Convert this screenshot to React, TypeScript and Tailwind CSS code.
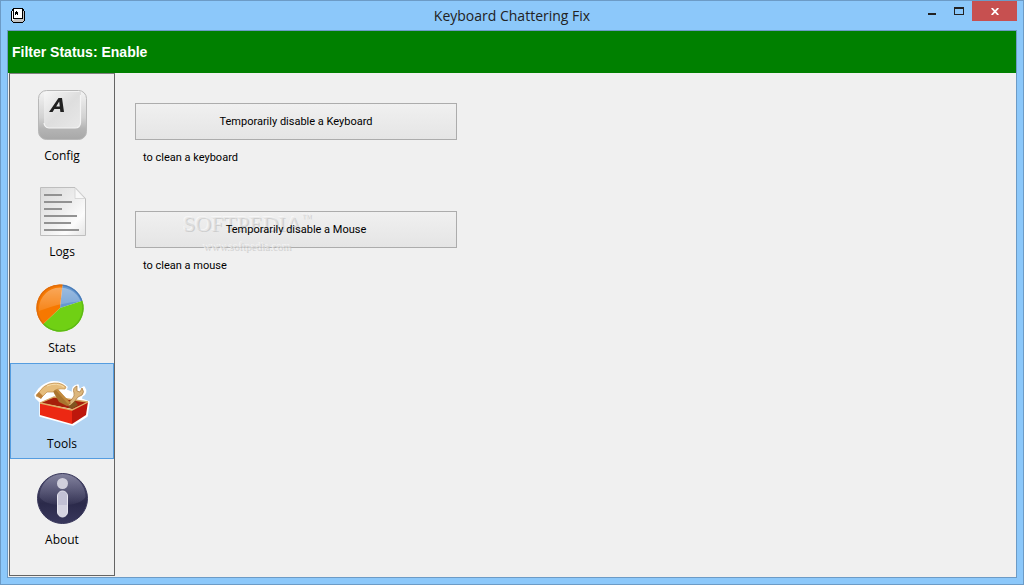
import type { ReactNode } from "react";

function KeyIcon() {
  return (
    <svg viewBox="0 0 56 56" className="size-14" aria-hidden="true">
      <defs>
        <linearGradient id="keyBase" x1="0" y1="0" x2="0" y2="1">
          <stop offset="0" stopColor="#f4f4f4" />
          <stop offset="0.55" stopColor="#d2d2d2" />
          <stop offset="0.78" stopColor="#b4b4b4" />
          <stop offset="1" stopColor="#a8a8a8" />
        </linearGradient>
        <linearGradient id="keyTop" x1="0" y1="0" x2="1" y2="1">
          <stop offset="0" stopColor="#f6f6f6" />
          <stop offset="0.5" stopColor="#dedede" />
          <stop offset="1" stopColor="#e8e8e8" />
        </linearGradient>
      </defs>
      <rect x="4.500" y="4.500" width="48" height="49" rx="8" fill="url(#keyBase)" stroke="#b8b8b8" />
      <path d="M10 6 H47 L46.500 37 Q46 42 41 42 H15 Q10 42 10 37 Z" fill="url(#keyTop)" />
      <path d="M46.500 9 V37 Q46 42 41 42 H15 Q10.500 41.500 10 37" fill="none" stroke="#f4f4f4" strokeWidth="1.200" />
      <path d="M15 26 L24.500 12 H28 L30 26 H26.400 L26 23 H20.400 L18.600 26 Z M22.200 20.400 H25.800 L25.200 15.400 Z" fill="#202020" fillRule="evenodd" />
    </svg>
  );
}

function LogsIcon() {
  return (
    <svg viewBox="0 0 56 56" className="size-14" aria-hidden="true">
      <defs>
        <linearGradient id="paper" x1="0" y1="0" x2="1" y2="1">
          <stop offset="0" stopColor="#dadada" />
          <stop offset="0.5" stopColor="#eeeeee" />
          <stop offset="0.75" stopColor="#fcfcfc" />
          <stop offset="1" stopColor="#e4e4e4" />
        </linearGradient>
      </defs>
      <path d="M6.500 5.500 H41 L51.500 16.500 V53.500 H6.500 Z" fill="url(#paper)" stroke="#bebebe" />
      <path d="M41 6 V16.500 H51 Z" fill="#f8f8f8" stroke="#d0d0d0" strokeWidth="0.800" />
      <path d="M10 13 H28 M10 20 H38 M10 27 H28 M10 34 H43 M10 41 H37 M10 48 H45" stroke="#929292" strokeWidth="1.800" />
    </svg>
  );
}

function StatsIcon() {
  return (
    <svg viewBox="0 -2 56 56" className="size-14" aria-hidden="true">
      <defs>
        <linearGradient id="pieShine" x1="0" y1="0" x2="0" y2="1">
          <stop offset="0" stopColor="#fff" stopOpacity="0.35" />
          <stop offset="1" stopColor="#fff" stopOpacity="0.1" />
        </linearGradient>
      </defs>
      <path d="M26 28 L28.500 4.600 A23.500 23.500 0 0 1 48.400 20.700 Z" fill="#6698d0" />
      <path d="M26 28 L48.400 20.700 A23.500 23.500 0 0 1 9 44.300 Z" fill="#70d014" />
      <path d="M26 28 L9 44.300 A23.500 23.500 0 0 1 28.500 4.600 Z" fill="#f67800" />
      <path d="M5 31 A21.500 21.500 0 0 1 46.500 21.300 Q26 23 5 31 Z" fill="url(#pieShine)" />
      <path d="M28.500 5.300 A22.800 22.800 0 0 1 47.700 20.900" fill="none" stroke="#497bb6" strokeWidth="1.300" />
      <path d="M47.700 20.900 A22.800 22.800 0 0 1 9.500 43.800" fill="none" stroke="#5cb916" strokeWidth="1.300" />
      <path d="M9.500 43.800 A22.800 22.800 0 0 1 28.500 5.300" fill="none" stroke="#df6c0c" strokeWidth="1.300" />
    </svg>
  );
}

function ToolsIcon() {
  return (
    <svg viewBox="0 -1 56 56" className="size-14" aria-hidden="true">
      <path
        d="M1 20 L5 14 Q10 9 17 7 Q27 6 33 12 L32 15 L39 18 Q37 11 44 10 L45 15 L50 12 Q54 18 48 21 L47 24 L55 27 L53 41 L39 50 L6 41 V27 L2 23 Z"
        fill="#fff" stroke="#fff" strokeWidth="1.500" strokeLinejoin="round"
      />
      <path d="M6 28 L20 22 L54 27 L39 34 Z" fill="#a71f0b" />
      <path d="M6 28 L20 22 L54 27" fill="none" stroke="#d6a35c" strokeWidth="1.300" />
      <path d="M33 30 L38 24 Q41 21 40 18 Q38 13 43 11 L43 16 L46 17 L48 13 Q51 17 48 20 L44 22 L37 31 Z" fill="#dcb67c" stroke="#a87638" strokeWidth="0.700" />
      <path d="M17 13 L22 13 L37 28 L33 31 L25 27 Z" fill="#a9752f" />
      <path d="M20 13 L24 14 L36 28 L34 29 Z" fill="#c38b3e" />
      <path d="M2 21 L6 16 Q9 11 15 9 Q26 6 32 12 L31 14 Q22 13 19 17 L13 17 L7 23 Z" fill="#e6bd7c" stroke="#bd8a45" strokeWidth="0.700" />
      <path d="M2 20 L5 17 L9 21 L7 24 Z" fill="#bd8038" />
      <path d="M13 11 Q23 7 30 12" fill="none" stroke="#f6dcab" />
      <path d="M34 32 L41 26 L44 30 L38 34 Z" fill="#81531f" />
      <path d="M6 28 L38 35 V49 L6 40 Z" fill="#ec2813" />
      <path d="M38 35 L54 27 L52 40 L38 49 Z" fill="#bd170c" />
      <path d="M6 28 L38 35 L54 27" fill="none" stroke="#dfad65" strokeWidth="1.300" />
    </svg>
  );
}

function AboutIcon() {
  return (
    <svg viewBox="0 1 56 56" className="size-14" aria-hidden="true">
      <defs>
        <linearGradient id="infoBall" x1="0" y1="0" x2="0" y2="1">
          <stop offset="0" stopColor="#555475" />
          <stop offset="0.6" stopColor="#2b2a4a" />
          <stop offset="1" stopColor="#38375c" />
        </linearGradient>
        <linearGradient id="infoShine" x1="0" y1="0" x2="0" y2="1">
          <stop offset="0" stopColor="#a0a0b8" stopOpacity="0.6" />
          <stop offset="1" stopColor="#8584a3" stopOpacity="0.1" />
        </linearGradient>
      </defs>
      <circle cx="28.500" cy="29.500" r="25" fill="url(#infoBall)" stroke="#37365a" />
      <path d="M5.500 28 A23 23 0 0 1 51.500 28 Q46 36 28.500 36 Q11 36 5.500 28 Z" fill="url(#infoShine)" />
      <circle cx="28.500" cy="14.500" r="5.500" fill="#d0cfdc" />
      <rect x="23.500" y="22" width="10" height="26" rx="5" fill="#d5d4e1" stroke="#e7e6ef" />
      <path d="M24 27 Q24 22.500 28.500 22.500 Q33 22.500 33 27 V36 H24 Z" fill="#c2c1d4" />
    </svg>
  );
}

function AppIcon() {
  return (
    <svg viewBox="0 0 14 15" className="h-[15px] w-[14px]" shapeRendering="crispEdges" aria-hidden="true">
      <path d="M2 0 H12 V1 H13 V3 H14 V13 H13 V14 H12 V15 H2 V14 H1 V13 H0 V3 H1 V1 H2 Z" fill="#000" />
      <path d="M1 3 H2 V11 H12 V3 H13 V13 H12 V14 H2 V13 H1 Z" fill="#c4c4c4" />
      <path d="M3 1 H11 V10 H3 Z M1 3 H2 V11 H3 V12 H1 Z" fill="#fff" />
      <path d="M5 3 H6 V4 H7 V7 H6 V6 H5 V7 H4 V4 H5 Z" fill="#000" />
    </svg>
  );
}

type Item = { label: string; icon: ReactNode; active?: boolean };

const items: Item[] = [
  { label: "Config", icon: <KeyIcon /> },
  { label: "Logs", icon: <LogsIcon /> },
  { label: "Stats", icon: <StatsIcon /> },
  { label: "Tools", icon: <ToolsIcon />, active: true },
  { label: "About", icon: <AboutIcon /> },
];

function NavButton({ label, icon, active }: Item) {
  return (
    <button
      type="button"
      aria-current={active ? "page" : undefined}
      className={
        active
          ? "flex h-24 w-full flex-col items-center border border-[#559de0] bg-[#b3d4f3] pt-2.5"
          : "flex h-24 w-full flex-col items-center border border-transparent pt-2.5"
      }
    >
      {icon}
      <span className="mt-1 text-[12px] leading-5">{label}</span>
    </button>
  );
}

function ToolAction({ label, note, children }: { label: string; note: string; children?: ReactNode }) {
  return (
    <section className="relative">
      <button
        type="button"
        className="h-[37px] w-full border border-[#acacac] bg-linear-to-b from-[#f0f0f0] to-[#e5e5e5] pt-0.5"
      >
        <span className="relative z-10">{label}</span>
      </button>
      {children}
      <p className="mt-2 px-2 leading-5">{note}</p>
    </section>
  );
}

function Watermark() {
  return (
    <div className="pointer-events-none absolute top-0.5 left-12 z-0 flex flex-col items-center font-['Liberation_Serif',serif] leading-none text-[#e6e6e6]/60 [text-shadow:1px_1px_0_#c0c0c0b0,-1px_-1px_0_#fafafab0]">
      <span className="flex items-start text-[22px]">
        SOFTPEDIA<span className="text-[10px]">™</span>
      </span>
      <span className="mt-1.5 text-[11px]">www.softpedia.com</span>
    </div>
  );
}

export default function App() {
  return (
    <div className="flex min-h-screen flex-col border border-[#6c9bc6] bg-[#8cc8fa] px-1.5 pb-1.5 font-['Open_Sans',sans-serif] text-black">
      <header className="grid h-[29px] grid-cols-[1fr_auto_1fr] items-start">
        <div className="pt-[7px] pl-1">
          <AppIcon />
        </div>
        <h1 className="text-[14px] leading-[30px] text-[#222]">Keyboard Chattering Fix</h1>
        <div className="flex justify-end">
          <button type="button" aria-label="Minimize" className="flex h-5 w-7 items-end justify-center pb-1.5">
            <span className="h-0.5 w-2 bg-[#222]" />
          </button>
          <button type="button" aria-label="Maximize" className="flex h-5 w-[26px] items-center justify-center">
            <span className="h-2 w-2.5 border border-t-2 border-[#222]" />
          </button>
          <button type="button" aria-label="Close" className="flex h-5 w-[45px] items-center justify-center bg-[#c75050]">
            <svg viewBox="0 0 8 7" className="h-[7px] w-2" aria-hidden="true">
              <path d="M0.700 0 L7.300 7 M7.300 0 L0.700 7" stroke="#fff" strokeWidth="1.800" />
            </svg>
          </button>
        </div>
      </header>

      <div className="flex flex-1 flex-col border border-[#6c9bc6] bg-[#f0f0f0]">
        <div role="status" className="bg-[#008000] px-1 font-['Liberation_Sans',sans-serif] text-[14px] leading-[42px] font-bold text-white">
          Filter Status: Enable
        </div>
        <div className="flex flex-1 pb-px pl-px">
          <nav className="w-[106px] border border-[#646464] border-t-[#808080] pt-px">
            {items.map((item) => (
              <NavButton key={item.label} {...item} />
            ))}
          </nav>
          <main className="flex-1 px-5 pt-[30px] font-[Roboto,sans-serif] text-[11px]">
            <div className="flex max-w-[322px] flex-col gap-[43px]">
              <ToolAction label="Temporarily disable a Keyboard" note="to clean a keyboard" />
              <ToolAction label="Temporarily disable a Mouse" note="to clean a mouse">
                <Watermark />
              </ToolAction>
            </div>
          </main>
        </div>
      </div>
    </div>
  );
}
